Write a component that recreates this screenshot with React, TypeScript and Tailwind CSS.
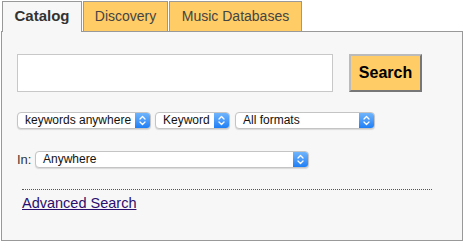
import React from "react";

function MacSelect({ label, width }: { label: string; width: string }) {
  return (
    <div
      className={`${width} flex h-[17px] items-stretch overflow-hidden rounded-[4px] border border-[#c4c4c4] bg-white shadow-[0_1px_1px_rgba(0,0,0,0.12)]`}
    >
      <span className="flex-1 whitespace-nowrap pl-[7px] text-[12px] leading-[15px] text-[#111]">{label}</span>
      <span className="flex w-[15px] items-center justify-center bg-gradient-to-b from-[#6fb4fb] to-[#1c7ff6]">
        <svg width="7" height="11" viewBox="0 0 7 11" fill="none" stroke="white" strokeWidth="1.3" strokeLinecap="round" strokeLinejoin="round">
          <path d="M1 4 L3.5 1.5 L6 4" />
          <path d="M1 7 L3.5 9.5 L6 7" />
        </svg>
      </span>
    </div>
  );
}

export default function App() {
  return (
    <div className="h-[243px] w-[464px] bg-white pl-[1px] pt-[1px] font-['Liberation_Sans',Arial,sans-serif]">
      <div className="relative z-10 -mb-[1px] ml-[1px] flex h-[31px] items-stretch gap-[1px]">
        <div className="flex w-[80px] items-center justify-center border border-b-0 border-[#999] bg-[#f7f7f7] pb-[1px] text-[15px] font-bold text-[#333]">
          Catalog
        </div>
        <div className="flex w-[85px] items-center justify-center border border-[#999] bg-[#ffcc66] pb-[1px] text-[14px] text-[#444]">
          Discovery
        </div>
        <div className="flex w-[133px] items-center justify-center border border-[#999] bg-[#ffcc66] pb-[1px] text-[14px] text-[#444]">
          Music Databases
        </div>
      </div>
      <div className="h-[210px] w-[462px] border border-[#999] bg-[#f7f7f7] pl-[15px] pt-[22px]">
        <div className="flex items-center gap-[16px]">
          <div className="h-[38px] w-[316px] border border-[#c8c8c8] bg-white" />
          <button className="h-[38px] w-[73px] border-2 border-b-[#777] border-l-[#bbb] border-r-[#777] border-t-[#bbb] bg-[#ffcc66] text-[16px] font-bold text-black">
            Search
          </button>
        </div>
        <div className="mt-[20px] flex items-center">
          <MacSelect label="keywords anywhere" width="w-[134px]" />
          <div className="ml-[4px]">
            <MacSelect label="Keyword" width="w-[75px]" />
          </div>
          <div className="ml-[5px]">
            <MacSelect label="All formats" width="w-[140px]" />
          </div>
        </div>
        <div className="mt-[21px] flex items-center">
          <span className="w-[18px] text-[13px] text-[#333]">In:</span>
          <MacSelect label="Anywhere" width="w-[274px]" />
        </div>
        <div className="ml-[5px] mt-[19px] w-[410px] border-t border-dotted border-[#555]" />
        <a href="#" className="ml-[5px] mt-[3px] inline-block text-[14.5px] text-[#2b0f6e] underline">
          Advanced Search
        </a>
      </div>
    </div>
  );
}
